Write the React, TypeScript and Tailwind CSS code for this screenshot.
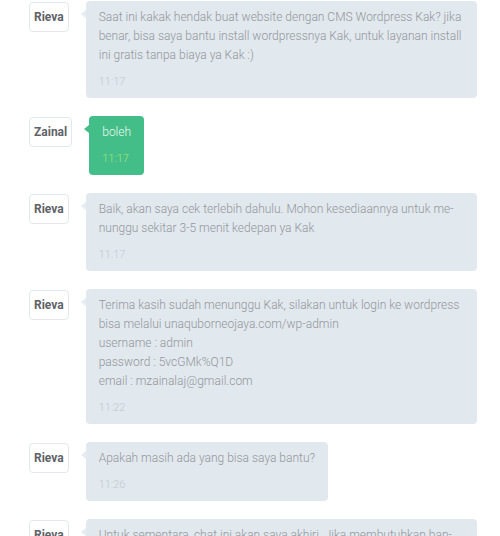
import React from "react";

type Msg = {
  from: string;
  lines: string[];
  time: string;
  mine?: boolean;
};

const messages: Msg[] = [
  {
    from: "Rieva",
    lines: [
      "Saat ini kakak hendak buat website dengan CMS Wordpress Kak? jika benar, bisa saya bantu install wordpressnya Kak, untuk layanan install ini gratis tanpa biaya ya Kak :)",
    ],
    time: "11:17",
  },
  { from: "Zainal", lines: ["boleh"], time: "11:17", mine: true },
  {
    from: "Rieva",
    lines: [
      "Baik, akan saya cek terlebih dahulu. Mohon kesediaannya untuk me\u00ADnunggu sekitar 3-5 menit kedepan ya Kak",
    ],
    time: "11:17",
  },
  {
    from: "Rieva",
    lines: [
      "Terima kasih sudah menunggu Kak, silakan untuk login ke wordpress bisa melalui unaquborneojaya.com/wp-admin",
      "username : admin",
      "password : 5vcGMk%Q1D",
      "email : mzainalaj@gmail.com",
    ],
    time: "11:22",
  },
  {
    from: "Rieva",
    lines: ["Apakah masih ada yang bisa saya bantu?"],
    time: "11:26",
  },
  {
    from: "Rieva",
    lines: [
      "Untuk sementara, chat ini akan saya akhiri. Jika membutuhkan ban\u00ADtuan lagi, silakan hubungi kami kembali ya Kak",
    ],
    time: "11:27",
  },
];

function Row({ m }: { m: Msg }) {
  return (
    <div className="flex items-start gap-[17px]">
      <div className="mt-[1px] shrink-0 rounded-[4px] border border-[#e4e8ec] bg-white px-[4px] py-[6px] text-[12px] font-bold leading-4 text-[#5f6368]">
        {m.from}
      </div>
      <div
        className={
          "relative min-w-0 rounded-[4px] px-[13px] pb-[8px] pt-[7px] " +
          (m.mine ? "bg-[#44be88]" : "bg-[#e1e8ee]")
        }
      >
        <span
          className={
            "absolute left-[-5px] top-[9px] h-0 w-0 border-y-[4px] border-r-[5px] border-y-transparent " +
            (m.mine ? "border-r-[#44be88]" : "border-r-[#e6ecf1]")
          }
        />
        <div
          className={
            "text-[12px] font-light leading-[19px] " +
            (m.mine ? "text-[#e9f7ef]" : "text-[#94979b]")
          }
        >
          {m.lines.map((l, i) => (
            <div key={i}>{l}</div>
          ))}
        </div>
        <div
          className={
            "mt-[9px] text-[11px] font-light leading-4 " +
            (m.mine ? "text-[#a6e072]" : "text-[#c3cad1]")
          }
        >
          {m.time}
        </div>
      </div>
    </div>
  );
}

export default function App() {
  return (
    <div
      className="flex h-[536px] w-[500px] flex-col gap-[18px] overflow-hidden bg-white pl-[29px] pr-[23px] pt-[1px]"
      style={{ fontFamily: "Roboto, 'Liberation Sans', sans-serif" }}
    >
      {messages.map((m, i) => (
        <Row key={i} m={m} />
      ))}
    </div>
  );
}
